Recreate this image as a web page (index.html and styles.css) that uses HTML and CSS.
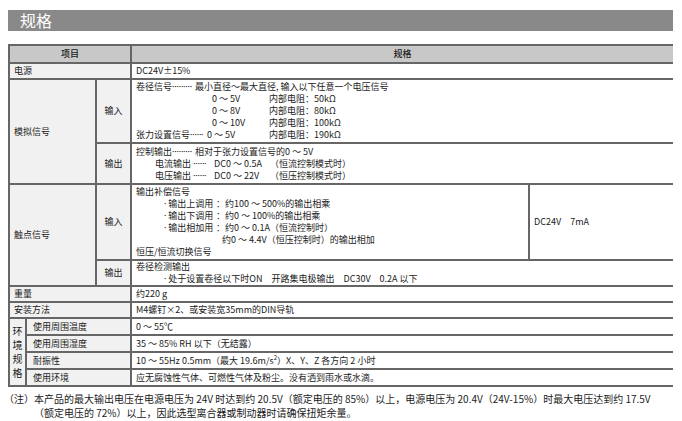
FILE: index.html
```html
<!DOCTYPE html>
<html lang="zh">
<head>
<meta charset="utf-8">
<link rel="stylesheet" href="styles.css">
</head>
<body>
<div class="title-bar"><h1>规格</h1></div>

<table class="spec">
  <colgroup>
    <col class="c-a"><col class="c-b"><col class="c-c"><col class="c-d"><col class="c-e">
  </colgroup>
  <tr class="head">
    <th colspan="3">项目</th>
    <th colspan="2">规格</th>
  </tr>
  <tr>
    <td class="lbl" colspan="3">电源</td>
    <td colspan="2">DC24V±15%</td>
  </tr>
  <tr>
    <td class="lbl" colspan="2" rowspan="2">模拟信号</td>
    <td class="lbl sub">输入</td>
    <td class="multi" colspan="2">
      <div class="ln"><span class="w59">卷径信号<span class="dots">·········</span></span>最小直径～最大直径, 输入以下任意一个电压信号</div>
      <div class="ln i76"><span class="w57">0 ～ 5V</span>内部电阻：50kΩ</div>
      <div class="ln i76"><span class="w57">0 ～ 8V</span>内部电阻：80kΩ</div>
      <div class="ln i76"><span class="w57">0 ～ 10V</span>内部电阻：100kΩ</div>
      <div class="ln"><span class="w71">张力设置信号<span class="dots">······</span></span><span class="w62">0 ～ 5V</span>内部电阻：190kΩ</div>
    </td>
  </tr>
  <tr>
    <td class="lbl sub">输出</td>
    <td class="multi m3" colspan="2">
      <div class="ln"><span class="w59">控制输出<span class="dots">·········</span></span>相对于张力设置信号的0 ～ 5V</div>
      <div class="ln i19"><span class="w59">电流输出 <span class="dots">······</span></span><span class="w56">DC0 ～ 0.5A</span>（恒流控制模式时）</div>
      <div class="ln i19"><span class="w59">电压输出 <span class="dots">······</span></span><span class="w56">DC0 ～ 22V</span>（恒压控制模式时）</div>
    </td>
  </tr>
  <tr>
    <td class="lbl" colspan="2" rowspan="2">触点信号</td>
    <td class="lbl sub">输入</td>
    <td class="multi">
      <div class="ln">输出补偿信号</div>
      <div class="ln i28"><span class="w52"><span class="dots">·</span> 输出上调用</span>：约100 ～ 500%的输出相乘</div>
      <div class="ln i28"><span class="w52"><span class="dots">·</span> 输出下调用</span>：约0 ～ 100%的输出相乘</div>
      <div class="ln i28"><span class="w52"><span class="dots">·</span> 输出相加用</span>：约0 ～ 0.1A（恒流控制时）</div>
      <div class="ln i86">约0 ～ 4.4V（恒压控制时）的输出相加</div>
      <div class="ln">恒压/恒流切换信号</div>
    </td>
    <td class="mid">DC24V　7mA</td>
  </tr>
  <tr>
    <td class="lbl sub">输出</td>
    <td class="multi m0" colspan="2">
      <div class="ln">卷径检测输出</div>
      <div class="ln i28"><span class="dots">·</span> 处于设置卷径以下时ON　开路集电极输出　DC30V　0.2A 以下</div>
    </td>
  </tr>
  <tr>
    <td class="lbl" colspan="3">重量</td>
    <td colspan="2">约220 g</td>
  </tr>
  <tr>
    <td class="lbl" colspan="3">安装方法</td>
    <td colspan="2">M4螺钉×2、或安装宽35mm的DIN导轨</td>
  </tr>
  <tr class="erow">
    <td class="lbl env" rowspan="4">环<br>境<br>规<br>格</td>
    <td class="lbl envsub" colspan="2">使用周围温度</td>
    <td colspan="2">0 ～ 55℃</td>
  </tr>
  <tr class="erow">
    <td class="lbl envsub" colspan="2">使用周围湿度</td>
    <td colspan="2">35 ～ 85% RH 以下（无结露）</td>
  </tr>
  <tr class="erow">
    <td class="lbl envsub" colspan="2">耐振性</td>
    <td colspan="2">10 ～ 55Hz 0.5mm（最大 19.6m/s<sup>2</sup>）X、Y、Z 各方向 2 小时</td>
  </tr>
  <tr class="erow">
    <td class="lbl envsub" colspan="2">使用环境</td>
    <td colspan="2">应无腐蚀性气体、可燃性气体及粉尘。没有洒到雨水或水滴。</td>
  </tr>
</table>

<div class="note">
  <span class="note-mark">（注）</span>
  <p>本产品的最大输出电压在电源电压为 24V 时达到约 20.5V（额定电压的 85%）以上，电源电压为 20.4V（24V-15%）时最大电压达到约 17.5V（额定电压的 72%）以上，因此选型离合器或制动器时请确保扭矩余量。</p>
</div>
</body>
</html>
```

FILE: styles.css
```css
* { box-sizing: border-box; }
html, body { background: #ffffff; }
body {
  margin: 10px 9px 0 8px;
  font-family: "Noto Sans CJK SC", "Noto Sans", sans-serif;
  color: #1a1a1a;
}
.title-bar {
  background: #898989;
  height: 21px;
  display: flex;
  align-items: center;
  padding-left: 12px;
}
.title-bar h1 {
  margin: 0;
  font-size: 16px;
  font-weight: 400;
  color: #ffffff;
  line-height: 21px;
}
.spec {
  margin-top: 13px;
  width: 665px;
  border-collapse: collapse;
  table-layout: fixed;
  font-size: 9px;
  line-height: 12px;
  border: 2px solid #3a3a3a;
}
.c-a { width: 17px; }
.c-b { width: 70px; }
.c-c { width: 35px; }
.c-d { width: 398px; }
.c-e { width: 145px; }
.spec th, .spec td {
  border: 2px solid #666666;
  padding: 1px 4px 1px;
  text-align: left;
  vertical-align: top;
  font-weight: 400;
  white-space: nowrap;
}
.spec tr.erow td { padding-top: 2px; }
.spec tr.head th {
  background: #c8c8c8;
  text-align: center;
  padding: 2px 4px 2px;
  font-weight: 500;
}
.spec td.multi { padding-top: 1px; padding-bottom: 1px; }
.spec td.m3 { padding-top: 2px; padding-bottom: 1px; }
.spec td.m0 { padding-top: 0; padding-bottom: 0; }
.ln { height: 12px; line-height: 12px; overflow: visible; }
.spec td.lbl {
  background: #f1f1f1;
  vertical-align: middle;
}
.spec td.sub { text-align: center; padding-left: 2px; padding-right: 2px; }
.spec td.mid { vertical-align: middle; }
.spec tr.erow td.env {
  text-align: center;
  padding: 0;
  font-size: 10px;
  line-height: 14px;
}
.spec td.envsub { padding-left: 6px; }
.spec sup { font-size: 6px; line-height: 0; vertical-align: 4px; }
.dots { font-family: "Noto Sans", "DejaVu Sans", sans-serif; letter-spacing: -0.2px; }
span[class^="w"] { display: inline-block; vertical-align: top; height: 12px; white-space: nowrap; overflow: hidden; }
.w52 { width: 52px; }
.w56 { width: 56px; }
.w57 { width: 57px; }
.w59 { width: 59px; }
.w62 { width: 62px; }
.w71 { width: 71px; }
.i19 { padding-left: 19px; }
.i28 { padding-left: 28px; }
.i76 { padding-left: 76px; }
.i86 { padding-left: 86px; }
.note {
  display: flex;
  margin-top: 5px;
  font-size: 10px;
  line-height: 14px;
  color: #1a1a1a;
}
.note-mark { flex: 0 0 27px; margin-left: -4px; }
.note p { margin: 0; width: 630px; }
```
